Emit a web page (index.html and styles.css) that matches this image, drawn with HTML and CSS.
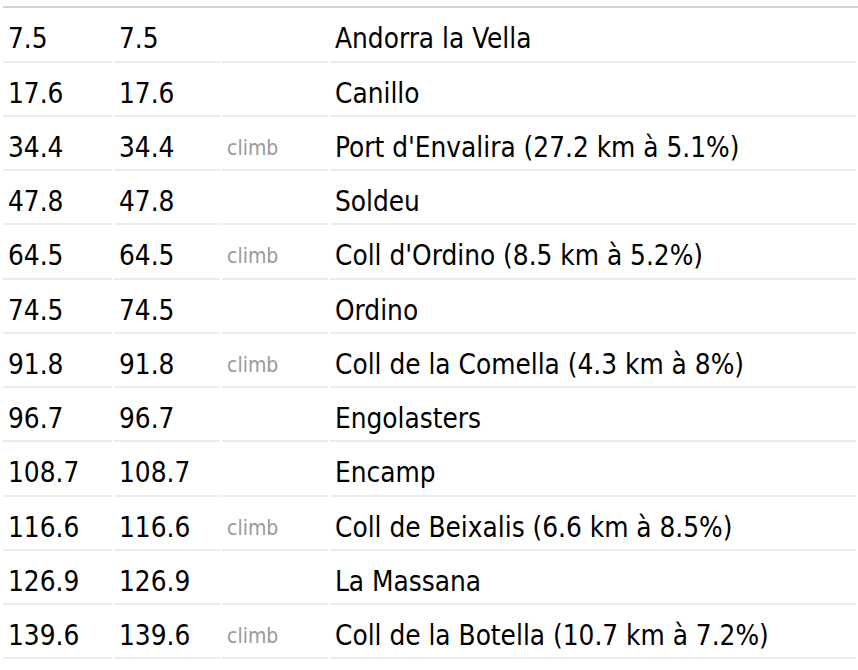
FILE: index.html
```html
<!DOCTYPE html>
<html>
<head>
<meta charset="utf-8">
<link rel="stylesheet" href="styles.css">
</head>
<body>
<table class="route">
  <colgroup>
    <col class="c-km">
    <col class="c-km2">
    <col class="c-type">
    <col class="c-name">
  </colgroup>
  <thead>
    <tr><th>km</th><th>km</th><th>Type</th><th>Waypoint</th></tr>
  </thead>
  <tbody>
    <tr><td>7.5</td><td>7.5</td><td></td><td>Andorra la Vella</td></tr>
    <tr><td>17.6</td><td>17.6</td><td></td><td>Canillo</td></tr>
    <tr><td>34.4</td><td>34.4</td><td class="tag">climb</td><td>Port d'Envalira (27.2 km à 5.1%)</td></tr>
    <tr><td>47.8</td><td>47.8</td><td></td><td>Soldeu</td></tr>
    <tr><td>64.5</td><td>64.5</td><td class="tag">climb</td><td>Coll d'Ordino (8.5 km à 5.2%)</td></tr>
    <tr><td>74.5</td><td>74.5</td><td></td><td>Ordino</td></tr>
    <tr><td>91.8</td><td>91.8</td><td class="tag">climb</td><td>Coll de la Comella (4.3 km à 8%)</td></tr>
    <tr><td>96.7</td><td>96.7</td><td></td><td>Engolasters</td></tr>
    <tr><td>108.7</td><td>108.7</td><td></td><td>Encamp</td></tr>
    <tr><td>116.6</td><td>116.6</td><td class="tag">climb</td><td>Coll de Beixalis (6.6 km à 8.5%)</td></tr>
    <tr><td>126.9</td><td>126.9</td><td></td><td>La Massana</td></tr>
    <tr><td>139.6</td><td>139.6</td><td class="tag">climb</td><td>Coll de la Botella (10.7 km à 7.2%)</td></tr>
  </tbody>
</table>
</body>
</html>
```
FILE: styles.css
```css
html, body {
  margin: 0;
  padding: 0;
  background: #fff;
}
body {
  font-family: "DejaVu Sans", Tahoma, sans-serif;
  font-stretch: condensed;
  color: #000;
  overflow: hidden;
}
.route {
  width: 100%;
  margin-top: -42px;
  padding-left: 1px;
  border-collapse: separate;
  border-spacing: 2px;
  table-layout: fixed;
  font-size: 27.7px;
  line-height: 34.27px;
}
.c-km { width: 109px; }
.c-km2 { width: 106px; }
.c-type { width: 106px; }
.route th {
  position: relative;
  text-align: left;
  font-weight: bold;
  padding: 8px 5px 4px;
  border-bottom: 2px solid #d4d4d4;
}
.route th::after {
  content: "";
  position: absolute;
  right: -2px;
  bottom: -2px;
  width: 2px;
  height: 2px;
  background: #d4d4d4;
}
.route td {
  text-align: left;
  padding: 12px 5px 4px;
  border-bottom: 2px solid #ebebeb;
  white-space: nowrap;
}
.route td.tag {
  color: #999;
  font-size: 21px;
}
```
